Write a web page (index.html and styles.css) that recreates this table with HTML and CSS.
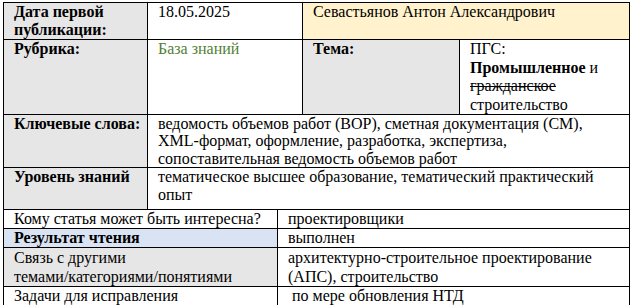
FILE: index.html
```html
<!DOCTYPE html>
<html lang="ru">
<head>
<meta charset="utf-8">
<title>Карточка статьи</title>
<link rel="stylesheet" href="styles.css">
</head>
<body>
<table class="card">
  <colgroup>
    <col class="c1"><col class="c2"><col class="c3"><col class="c4"><col class="c5">
  </colgroup>
  <tr class="r-date">
    <th class="label">Дата первой публикации:</th>
    <td class="val" colspan="2">18.05.2025</td>
    <td class="val author" colspan="2">Севастьянов Антон Александрович</td>
  </tr>
  <tr class="r-rubric">
    <th class="label">Рубрика:</th>
    <td class="val green" colspan="2">База знаний</td>
    <th class="label">Тема:</th>
    <td class="val">ПГС:<br><b>Промышленное</b> и <s>гражданское</s> строительство</td>
  </tr>
  <tr class="r-keys">
    <th class="label">Ключевые слова:</th>
    <td class="val" colspan="4">ведомость объемов работ (ВОР), сметная документация (СМ), XML-формат, оформление, разработка, экспертиза, сопоставительная ведомость объемов работ</td>
  </tr>
  <tr class="r-level">
    <th class="label">Уровень знаний</th>
    <td class="val" colspan="4">тематическое высшее образование, тематический практический опыт</td>
  </tr>
  <tr class="low">
    <td class="plain" colspan="2">Кому статья может быть интересна?</td>
    <td class="val2" colspan="3">проектировщики</td>
  </tr>
  <tr class="low r-result">
    <th class="plain blue" colspan="2">Результат чтения</th>
    <td class="val2" colspan="3">выполнен</td>
  </tr>
  <tr class="low r-link">
    <td class="plain gray" colspan="2">Связь с другими<br>темами/категориями/понятиями</td>
    <td class="val2" colspan="3">архитектурно-строительное проектирование (АПС), строительство</td>
  </tr>
  <tr class="low r-tasks">
    <td class="plain" colspan="2">Задачи для исправления</td>
    <td class="val2" colspan="3">&nbsp;по мере обновления НТД</td>
  </tr>
</table>
</body>
</html>
```
FILE: styles.css
```css
html, body {
  margin: 0;
  padding: 0;
  background: #ffffff;
}
body {
  padding: 2px 0 0 3px;
  font-family: "Liberation Serif", "Times New Roman", serif;
  font-size: 16px;
  color: #000;
}
.card {
  border-collapse: collapse;
  table-layout: fixed;
  width: 626px;
}
.c1 { width: 144px; }
.c2 { width: 130px; }
.c3 { width: 25px; }
.c4 { width: 157px; }
.c5 { width: 170px; }
.card th, .card td {
  border: 1px solid #000;
  vertical-align: top;
  text-align: left;
  line-height: 18.5px;
  padding: 0 6px 0 10px;
  font-family: "Liberation Serif", "Times New Roman", serif;
  font-size: 16px;
}
.r-date th, .r-date td {
  line-height: 18px;
}
.r-keys th, .r-keys td {
  line-height: 17.4px;
}
.r-level th, .r-level td {
  line-height: 18px;
  padding-bottom: 5px;
}
.label {
  background: #e7e6e6;
  font-weight: bold;
}
.val {
  background: #fff;
  font-weight: normal;
}
.author {
  background: #fff2cc;
}
.green {
  color: #538135;
}
.low th, .low td {
  line-height: 18px;
}
.r-link th, .r-link td {
  line-height: 19px;
}
.plain {
  padding-left: 7px;
  font-weight: normal;
}
.blue {
  background: #dae3f3;
  font-weight: bold;
}
.gray {
  background: #e7e6e6;
}
.val2 {
  padding-left: 5px;
}
```
